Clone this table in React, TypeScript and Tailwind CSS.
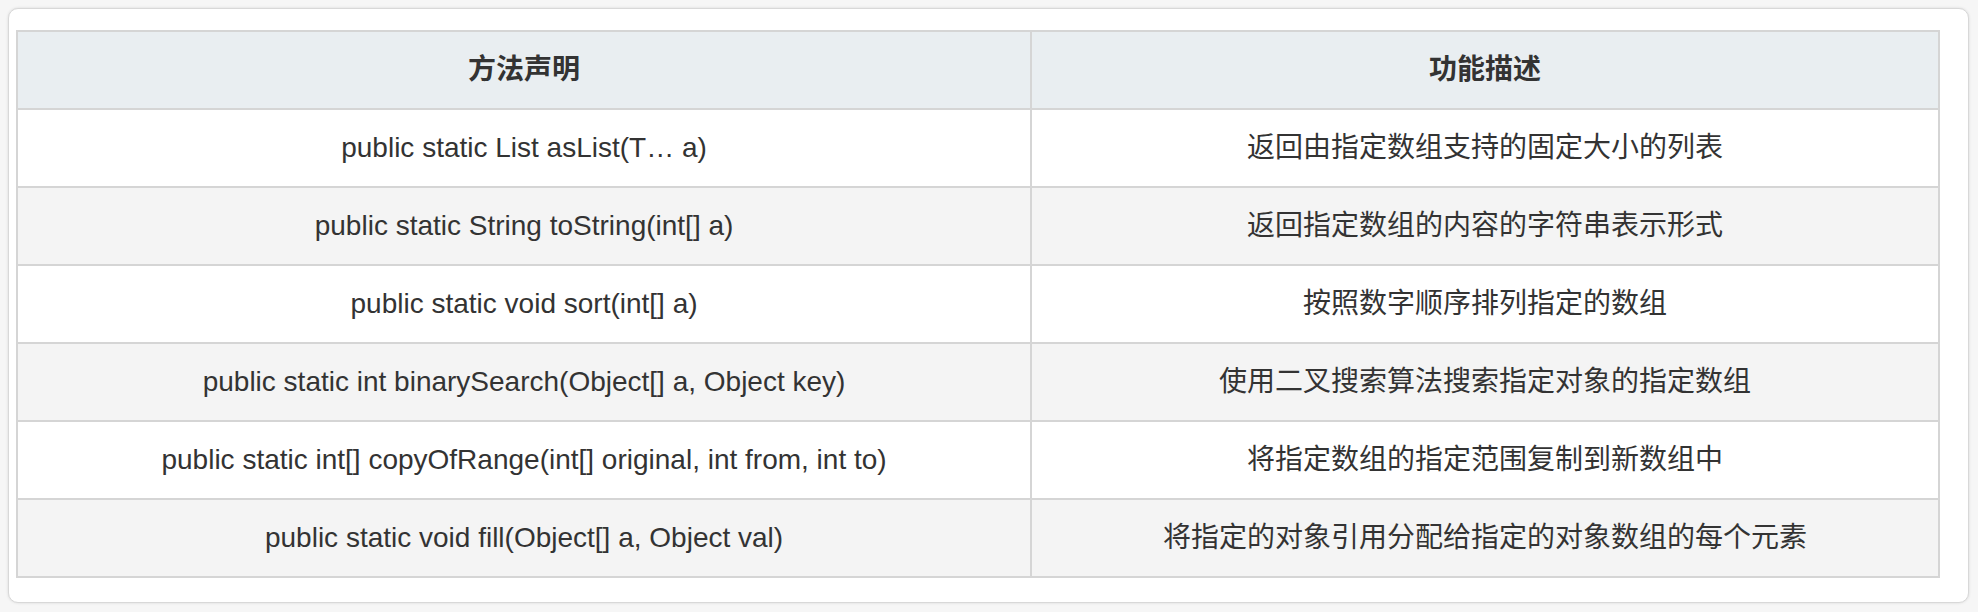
const rows: [string, string][] = [
  ["public static List asList(T… a)", "返回由指定数组支持的固定大小的列表"],
  ["public static String toString(int[] a)", "返回指定数组的内容的字符串表示形式"],
  ["public static void sort(int[] a)", "按照数字顺序排列指定的数组"],
  ["public static int binarySearch(Object[] a, Object key)", "使用二叉搜索算法搜索指定对象的指定数组"],
  ["public static int[] copyOfRange(int[] original, int from, int to)", "将指定数组的指定范围复制到新数组中"],
  ["public static void fill(Object[] a, Object val)", "将指定的对象引用分配给指定的对象数组的每个元素"],
];

export default function App() {
  return (
    <div
      className="w-[1978px] h-[612px] bg-[#f6f6f6] pt-[8px] pl-[8px]"
      style={{ fontFamily: '"Liberation Sans", "Noto Sans CJK SC", sans-serif' }}
    >
      <div className="w-[1961px] h-[595px] bg-white border border-[#d8d8d8] rounded-[10px] shadow-[0_0_3px_rgba(0,0,0,0.12)] pt-[21px] pl-[7px]">
        <table className="w-[1924px] border-collapse text-[28px] text-[#333333]">
          <colgroup>
            <col className="w-[1015px]" />
            <col className="w-[909px]" />
          </colgroup>
          <thead>
            <tr className="h-[78px] bg-[#e9eef1]">
              <th className="border-2 border-[#d5d5d5] font-bold text-center">方法声明</th>
              <th className="border-2 border-[#d5d5d5] font-bold text-center">功能描述</th>
            </tr>
          </thead>
          <tbody>
            {rows.map(([sig, desc], i) => (
              <tr key={i} className={i % 2 === 1 ? "h-[78px] bg-[#f4f4f4]" : "h-[78px] bg-white"}>
                <td className="border-2 border-[#d5d5d5] text-center">{sig}</td>
                <td className="border-2 border-[#d5d5d5] text-center">{desc}</td>
              </tr>
            ))}
          </tbody>
        </table>
      </div>
    </div>
  );
}
